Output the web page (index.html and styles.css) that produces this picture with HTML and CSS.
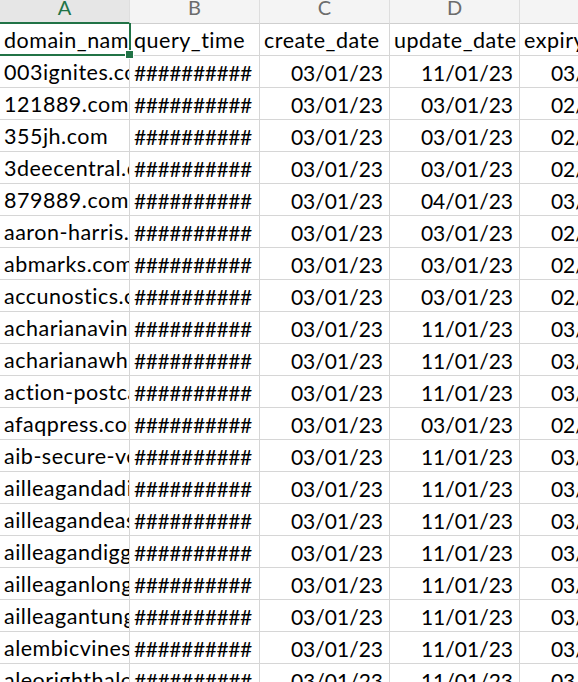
FILE: index.html
```html
<!DOCTYPE html>
<html>
<head>
<meta charset="utf-8">
<link rel="stylesheet" href="styles.css">
</head>
<body>
<div class="sheet">
  <div class="col-head selected">A</div>
  <div class="col-head">B</div>
  <div class="col-head">C</div>
  <div class="col-head">D</div>
  <div class="col-head">E</div>

  <div class="cell active"><span class="clip">domain_name</span></div><div class="cell">query_time</div><div class="cell">create_date</div><div class="cell">update_date</div><div class="cell">expiry_date</div>
  <div class="cell">003ignites.com</div><div class="cell hash">##########</div><div class="cell num">03/01/23</div><div class="cell num">11/01/23</div><div class="cell num">03/01/24</div>
  <div class="cell">121889.com</div><div class="cell hash">##########</div><div class="cell num">03/01/23</div><div class="cell num">03/01/23</div><div class="cell num">02/01/24</div>
  <div class="cell">355jh.com</div><div class="cell hash">##########</div><div class="cell num">03/01/23</div><div class="cell num">03/01/23</div><div class="cell num">02/01/24</div>
  <div class="cell">3deecentral.com</div><div class="cell hash">##########</div><div class="cell num">03/01/23</div><div class="cell num">03/01/23</div><div class="cell num">02/01/24</div>
  <div class="cell">879889.com</div><div class="cell hash">##########</div><div class="cell num">03/01/23</div><div class="cell num">04/01/23</div><div class="cell num">03/01/24</div>
  <div class="cell">aaron-harris.com</div><div class="cell hash">##########</div><div class="cell num">03/01/23</div><div class="cell num">03/01/23</div><div class="cell num">02/01/24</div>
  <div class="cell">abmarks.com</div><div class="cell hash">##########</div><div class="cell num">03/01/23</div><div class="cell num">03/01/23</div><div class="cell num">02/01/24</div>
  <div class="cell">accunostics.com</div><div class="cell hash">##########</div><div class="cell num">03/01/23</div><div class="cell num">03/01/23</div><div class="cell num">02/01/24</div>
  <div class="cell">acharianavin.com</div><div class="cell hash">##########</div><div class="cell num">03/01/23</div><div class="cell num">11/01/23</div><div class="cell num">03/01/24</div>
  <div class="cell">acharianawhite.com</div><div class="cell hash">##########</div><div class="cell num">03/01/23</div><div class="cell num">11/01/23</div><div class="cell num">03/01/24</div>
  <div class="cell">action-postcard.com</div><div class="cell hash">##########</div><div class="cell num">03/01/23</div><div class="cell num">11/01/23</div><div class="cell num">03/01/24</div>
  <div class="cell">afaqpress.com</div><div class="cell hash">##########</div><div class="cell num">03/01/23</div><div class="cell num">03/01/23</div><div class="cell num">02/01/24</div>
  <div class="cell">aib-secure-verify.com</div><div class="cell hash">##########</div><div class="cell num">03/01/23</div><div class="cell num">11/01/23</div><div class="cell num">03/01/24</div>
  <div class="cell">ailleagandadin.com</div><div class="cell hash">##########</div><div class="cell num">03/01/23</div><div class="cell num">11/01/23</div><div class="cell num">03/01/24</div>
  <div class="cell">ailleagandeas.com</div><div class="cell hash">##########</div><div class="cell num">03/01/23</div><div class="cell num">11/01/23</div><div class="cell num">03/01/24</div>
  <div class="cell">ailleagandiggin.com</div><div class="cell hash">##########</div><div class="cell num">03/01/23</div><div class="cell num">11/01/23</div><div class="cell num">03/01/24</div>
  <div class="cell">ailleaganlong.com</div><div class="cell hash">##########</div><div class="cell num">03/01/23</div><div class="cell num">11/01/23</div><div class="cell num">03/01/24</div>
  <div class="cell">ailleagantungs.com</div><div class="cell hash">##########</div><div class="cell num">03/01/23</div><div class="cell num">11/01/23</div><div class="cell num">03/01/24</div>
  <div class="cell">alembicvines.com</div><div class="cell hash">##########</div><div class="cell num">03/01/23</div><div class="cell num">11/01/23</div><div class="cell num">03/01/24</div>
  <div class="cell">aleorighthalo.com</div><div class="cell hash">##########</div><div class="cell num">03/01/23</div><div class="cell num">11/01/23</div><div class="cell num">03/01/24</div>
</div>
</body>
</html>
```

FILE: styles.css
```css
html, body {
  margin: 0;
  padding: 0;
  background: #ffffff;
  overflow: hidden;
}

.sheet {
  display: grid;
  grid-template-columns: repeat(5, 130px);
  grid-template-rows: 24px;
  grid-auto-rows: 32px;
  font-family: Lato, "Liberation Sans", sans-serif;
  color: #000000;
}

.col-head {
  box-sizing: border-box;
  background: #f4f4f4;
  border-right: 1px solid #dedede;
  border-bottom: 1px solid #cfcfcf;
  color: #6c6c6c;
  font-size: 20px;
  line-height: 14px;
  text-align: center;
  overflow: hidden;
}

.col-head.selected {
  background: #e6e6e6;
  color: #217346;
  border-bottom: 2px solid #217346;
}

.cell {
  box-sizing: border-box;
  position: relative;
  border-right: 1px solid #d6d6d6;
  border-bottom: 1px solid #d6d6d6;
  font-size: 21.5px;
  letter-spacing: 0.5px;
  line-height: 31px;
  padding: 1px 3px 0 4px;
  white-space: nowrap;
  overflow: hidden;
}

.cell.num {
  font-size: 21px;
  letter-spacing: 0;
  text-align: right;
  padding-right: 6px;
}

.cell.hash {
  font-size: 21px;
  letter-spacing: -0.4px;
}

.cell.active {
  overflow: visible;
  z-index: 2;
  padding-right: 1px;
}

.clip {
  display: block;
  overflow: hidden;
}

.cell.active::before {
  content: "";
  position: absolute;
  left: 0;
  top: -1px;
  right: -2px;
  bottom: -1px;
  border: 2px solid #217346;
  border-left: none;
  border-top: none;
  pointer-events: none;
}

.cell.active::after {
  content: "";
  position: absolute;
  right: -5px;
  bottom: -4px;
  width: 7px;
  height: 7px;
  background: #217346;
  border: 1px solid #ffffff;
}
```
